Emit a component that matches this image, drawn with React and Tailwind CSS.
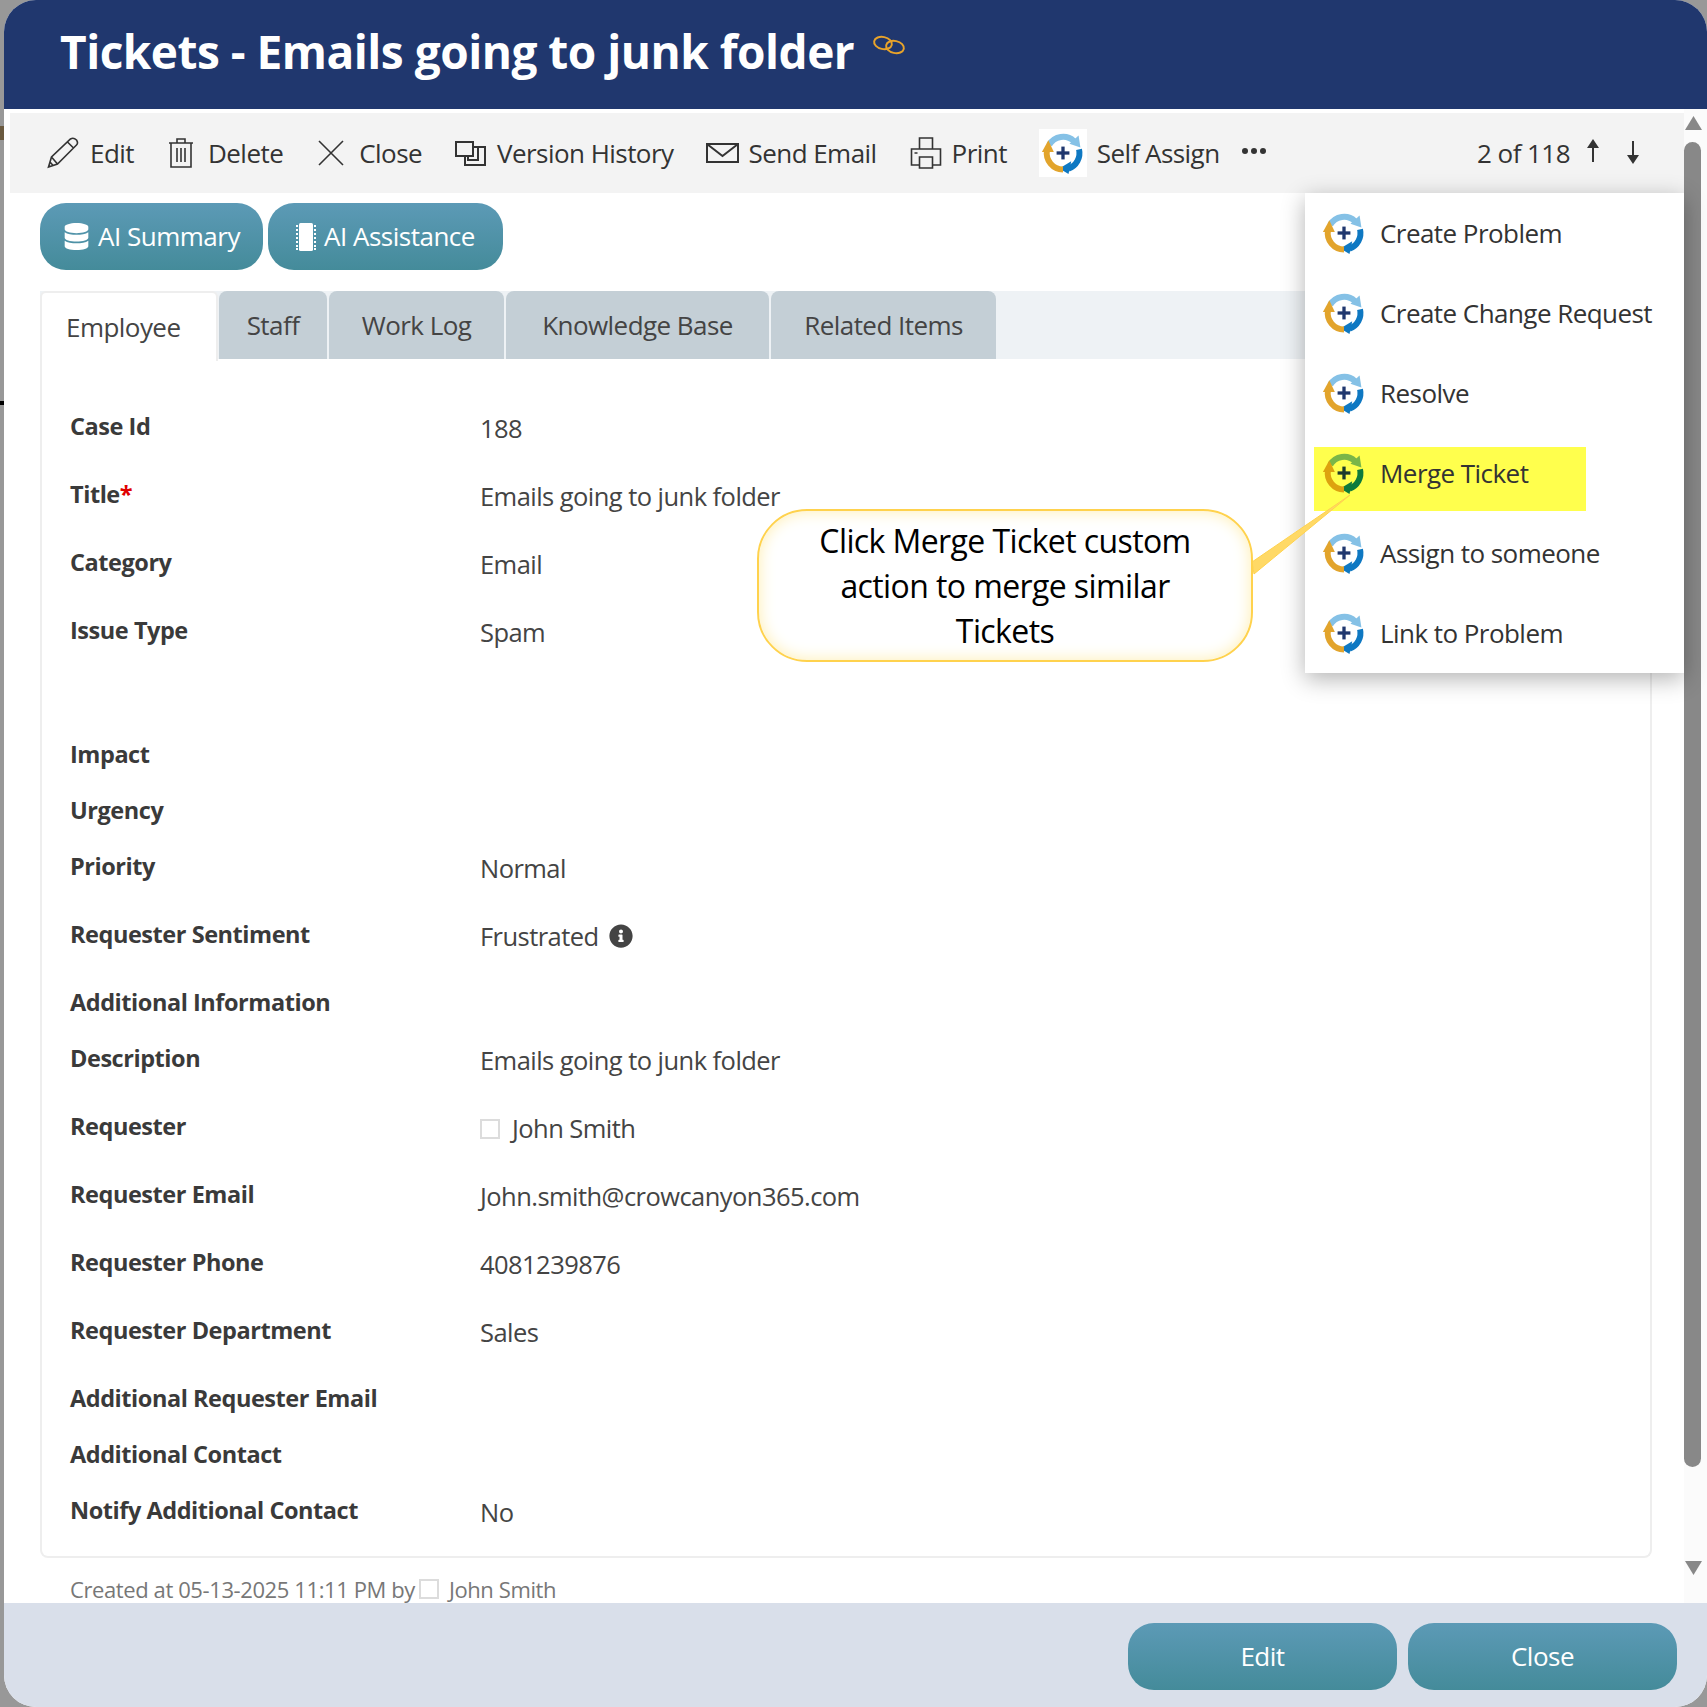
import React from "react";
import { FaDatabase, FaInfoCircle } from "react-icons/fa";

const Gear = ({ green = false, size = 44 }) => (
  <svg width={size} height={size} viewBox="0 0 48 48" fill="none" className="shrink-0">
    <path d="M9 15 A17.5 17.5 0 0 1 36 11" stroke={green ? "#7ab648" : "#85c1e6"} strokeWidth="6.5" />
    <polygon points="41,5 43,18 31,14" fill={green ? "#7ab648" : "#85c1e6"} />
    <path d="M41.5 20 A18 18 0 0 1 30 41" stroke={green ? "#0d7a3c" : "#0e78c2"} strokeWidth="6.5" />
    <polygon points="33,33 20,41 30,47" fill={green ? "#0d7a3c" : "#0e78c2"} />
    <path d="M24 42 A18 18 0 0 1 6.5 21" stroke={green ? "#dda20f" : "#e2a42c"} strokeWidth="6.5" />
    <polygon points="1,23 8,10 14,23" fill={green ? "#dda20f" : "#e2a42c"} />
    <rect x="17" y="22.2" width="14" height="3.6" fill={green ? "#1c3a2c" : "#20376e"} />
    <rect x="22.2" y="17" width="3.6" height="14" fill={green ? "#1c3a2c" : "#20376e"} />
  </svg>
);

const I = ({ w = 32, h = 32, vb = "0 0 32 32", children }) => (
  <svg width={w} height={h} viewBox={vb} fill="none" stroke="#333" strokeWidth="1.6" className="shrink-0">{children}</svg>
);

const PencilI = () => (
  <I w={33} h={32}>
    <path d="M2 30 L5 20 L24 2 Q27 0 30 3 Q32 6 30 8 L11 27 Z M5 20 L11 27 M3.5 25 L7 29 M21 5 L27 11" />
  </I>
);
const TrashI = () => (
  <I w={26} h={32} vb="0 0 26 32">
    <path d="M1 6 H25 M9 6 V2 H17 V6 M3 6 V30 H23 V6 M9 11 V25 M13 11 V25 M17 11 V25" />
  </I>
);
const XI = () => (
  <I w={28} h={28} vb="0 0 28 28">
    <path d="M2 2 L26 26 M26 2 L2 26" />
  </I>
);
const VersionI = () => (
  <I w={33} h={27} vb="0 0 33 27">
    <path strokeWidth="2" d="M2 2 H19 V16 H2 Z M19 7 H31 V25 H11 V16 M24 7 V20 H14 V16" />
  </I>
);
const MailI = () => (
  <I w={33} h={20} vb="0 0 33 20">
    <path strokeWidth="2" d="M1 1 H32 V19 H1 Z M1 1 L16.5 13 L32 1" />
  </I>
);
const PrintI = () => (
  <I w={33} h={32}>
    <path d="M10 12 V1 H23 V12 M10 28 H2 V12 H31 V28 H23 M10 20 H23 V31 H10 Z M5 16 H8" />
  </I>
);
const ArrowUp = () => (
  <svg width="14" height="24" viewBox="0 0 14 24" className="shrink-0">
    <path d="M7 0 L13 9 H8 V23 H6 V9 H1 Z" fill="#333" />
  </svg>
);
const ArrowDown = () => (
  <svg width="14" height="24" viewBox="0 0 14 24" className="shrink-0">
    <path d="M7 24 L13 15 H8 V1 H6 V15 H1 Z" fill="#333" />
  </svg>
);
const ChipI = () => (
  <svg width="20" height="28" viewBox="0 0 20 28" className="shrink-0" fill="#fff">
    <rect x="3" y="0" width="14" height="28" rx="1.5" />
    {[2, 6, 10, 14, 18, 22, 25].map((y) => (
      <g key={y}>
        <rect x="0" y={y} width="2" height="2" />
        <rect x="18" y={y} width="2" height="2" />
      </g>
    ))}
  </svg>
);
const LinkI = () => (
  <svg width="34" height="20" viewBox="0 0 34 20" fill="none" stroke="#e8a32a" strokeWidth="2" className="shrink-0">
    <ellipse cx="11" cy="8" rx="9" ry="6" transform="rotate(12 11 8)" />
    <ellipse cx="23" cy="12" rx="9" ry="6" transform="rotate(12 23 12)" />
  </svg>
);

const Tool = ({ icon, label, cls, textCls = "ml-[11px]" }) => (
  <div className={`flex items-center ${cls}`}>
    {icon}
    <span className={textCls}>{label}</span>
  </div>
);

const rows = [
  ["Case Id", "188", "h-[68px]"],
  ["Title", "Emails going to junk folder", "h-[68px]", "req"],
  ["Category", "Email", "h-[68px]"],
  ["Issue Type", "Spam", "h-[124px]"],
  ["Impact", "", "h-[56px]"],
  ["Urgency", "", "h-[56px]"],
  ["Priority", "Normal", "h-[68px]"],
  ["Requester Sentiment", "Frustrated", "h-[68px]", "info"],
  ["Additional Information", "", "h-[56px]"],
  ["Description", "Emails going to junk folder", "h-[68px]"],
  ["Requester", "John Smith", "h-[68px]", "check"],
  ["Requester Email", "John.smith@crowcanyon365.com", "h-[68px]"],
  ["Requester Phone", "4081239876", "h-[68px]"],
  ["Requester Department", "Sales", "h-[68px]"],
  ["Additional Requester Email", "", "h-[56px]"],
  ["Additional Contact", "", "h-[56px]"],
  ["Notify Additional Contact", "No", "h-[61px]"],
];

const Row = ({ r }) => (
  <div className={`grid grid-cols-[410px_1fr] ${r[2]}`}>
    <div className="text-[23.5px] leading-[30px] font-bold text-[#3a3a3a] tracking-[-0.45px]">
      {r[0]}
      {r[3] === "req" && <span className="text-[#e00000]">*</span>}
    </div>
    <div className="flex items-start text-[#444] text-[25.5px] leading-[34px] tracking-[-0.55px]">
      {r[3] === "check" && <span className="w-[20px] h-[20px] mt-[8px] mr-[12px] border-2 border-[#dcdcdc] shrink-0" />}
      <span>{r[1]}</span>
      {r[3] === "info" && <FaInfoCircle className="ml-[10px] mt-[5px] text-[24px] text-[#444]" />}
    </div>
  </div>
);

const tabs = [
  ["Staff", "w-[108px]"],
  ["Work Log", "w-[175px]"],
  ["Knowledge Base", "w-[263px]"],
  ["Related Items", "w-[225px]"],
];

const menu = ["Create Problem", "Create Change Request", "Resolve", "Merge Ticket", "Assign to someone", "Link to Problem"];

const btn = "flex items-center justify-center rounded-[26px] bg-gradient-to-b from-[#5c9ab6] to-[#448b9a] text-white";

export default function App() {
  return (
    <div className="relative w-[1707px] h-[1707px] overflow-hidden bg-[#989898] font-['Open_Sans',sans-serif]">
      <span className="absolute left-0 top-[126px] w-[4px] h-[14px] bg-[#6b5a40]" />
      <span className="absolute left-0 top-[401px] w-[4px] h-[4px] bg-black" />

      <div className="ml-[4px] w-[1703px] h-full rounded-[32px] overflow-hidden flex flex-col bg-white">
        {/* header */}
        <div className="h-[109px] shrink-0 bg-[#20376e] flex items-center pl-[56px]">
          <h1 className="text-[46px] leading-[60px] font-bold text-white tracking-[-0.5px] -mt-[8px]">Tickets - Emails going to junk folder</h1>
          <span className="ml-[18px] -mt-[20px]"><LinkI /></span>
        </div>

        {/* body */}
        <div className="flex-1 min-h-0 flex">
          <div className="flex-1 min-w-0 overflow-hidden pt-[4px]">
            <div className="ml-[6px] h-[80px] bg-[#f3f3f3] flex items-center text-[#333] text-[26px] tracking-[-0.55px] pl-[36px]">
              <Tool icon={<PencilI />} label="Edit" cls="" />
              <Tool icon={<TrashI />} label="Delete" cls="ml-[34px]" textCls="ml-[14px]" />
              <Tool icon={<XI />} label="Close" cls="ml-[34px]" textCls="ml-[14px]" />
              <Tool icon={<VersionI />} label="Version History" cls="ml-[32px]" textCls="ml-[10px]" />
              <Tool icon={<MailI />} label="Send Email" cls="ml-[32px]" textCls="ml-[10px]" />
              <Tool icon={<PrintI />} label="Print" cls="ml-[32px]" textCls="ml-[10px]" />
              <Tool icon={<span className="bg-white w-[48px] h-[48px] flex items-center justify-center shrink-0"><Gear /></span>} label="Self Assign" cls="ml-[32px]" textCls="ml-[10px]" />
              <span className="ml-[22px] flex gap-[3px] -mt-[4px]">
                <i className="w-[6px] h-[6px] rounded-full bg-[#333]" />
                <i className="w-[6px] h-[6px] rounded-full bg-[#333]" />
                <i className="w-[6px] h-[6px] rounded-full bg-[#333]" />
              </span>
              <div className="ml-auto mr-[44px] flex items-center">
                <span>2 of 118</span>
                <span className="ml-[16px] -mt-[4px]"><ArrowUp /></span>
                <span className="ml-[26px] -mt-[2px]"><ArrowDown /></span>
              </div>
            </div>

            <div className="pl-[36px] pr-[32px]">
              <div className="flex gap-[5px] pt-[10px] text-[26px] tracking-[-0.5px]">
                <button className={`${btn} w-[223px] h-[67px] gap-[8px]`}>
                  <FaDatabase className="text-[27px]" />
                  AI Summary
                </button>
                <button className={`${btn} w-[235px] h-[67px] gap-[8px]`}>
                  <ChipI />
                  AI Assistance
                </button>
              </div>

              <div className="mt-[21px] h-[68px] flex bg-[#eef2f5] text-[26px] tracking-[-0.55px]">
                <div className="w-[178px] bg-white border-t-2 border-x-2 border-[#eeeeee] rounded-t-[6px] flex items-center pl-[24px] text-[#444] h-[70px] -mb-[2px]">Employee</div>
                <div className="flex gap-[2px] ml-[1px] text-[#444]">
                  {tabs.map(([t, w]) => (
                    <div key={t} className={`${w} bg-[#c4cfd6] rounded-t-[8px] flex items-center justify-center`}>{t}</div>
                  ))}
                </div>
              </div>

              <div className="border-2 border-t-0 border-[#eeeeee] rounded-b-[8px] pl-[28px] pt-[52px]">
                {rows.map((r) => <Row key={r[0]} r={r} />)}
              </div>

              <div className="flex items-center mt-[16px] pl-[30px] text-[22px] leading-[30px] text-[#777] tracking-[-0.4px]">
                <span>Created at 05-13-2025 11:11 PM by</span>
                <span className="w-[20px] h-[20px] ml-[4px] mr-[10px] border-2 border-[#dcdcdc]" />
                <span>John Smith</span>
              </div>
            </div>
          </div>

          {/* scrollbar */}
          <div className="w-[23px] shrink-0 bg-[#fbfbfb] flex flex-col items-start pt-[7px]">
            <svg width="19" height="14" viewBox="0 0 19 14" className="shrink-0"><path d="M9.5 0 L18 14 H1 Z" fill="#888" strokeLinejoin="round" /></svg>
            <div className="w-[17px] h-[1325px] mt-[12px] bg-[#888] rounded-full" />
            <svg width="19" height="14" viewBox="0 0 19 14" className="shrink-0 mt-[94px]"><path d="M1 0 H18 L9.5 14 Z" fill="#888" /></svg>
          </div>
        </div>

        {/* footer */}
        <div className="h-[104px] shrink-0 bg-[#d9dfea] flex justify-end gap-[11px] pt-[20px] pr-[30px] text-[26px] tracking-[-0.5px]">
          <button className={`${btn} w-[269px] h-[67px]`}>Edit</button>
          <button className={`${btn} w-[269px] h-[67px]`}>Close</button>
        </div>
      </div>

      {/* dropdown menu */}
      <div className="absolute left-[1305px] top-[193px] w-[379px] bg-white shadow-[0_6px_22px_rgba(0,0,0,0.3)] text-[#333] text-[26px] tracking-[-0.55px]">
        {menu.map((m, i) => (
          <div key={m} className="relative h-[80px] flex items-center pl-[17px] gap-[14px]">
            {i === 3 && <span className="absolute left-[9px] top-[14px] w-[272px] h-[64px] bg-[#ffff4d]" />}
            <span className="relative"><Gear green={i === 3} /></span>
            <span className="relative">{m}</span>
          </div>
        ))}
      </div>

      {/* callout */}
      <svg width="110" height="90" viewBox="0 0 110 90" className="absolute left-[1248px] top-[490px]">
        <polygon points="4,72 102,5 6,84" fill="#ffd966" stroke="#ffd24d" strokeWidth="1" />
      </svg>
      <div className="absolute left-[757px] top-[509px] w-[496px] h-[153px] rounded-[50px] border-2 border-[#ffd24d] bg-white shadow-[inset_0_0_16px_#ffeeb0] flex items-center justify-center text-center text-black text-[32px] leading-[45px] tracking-[-0.6px]">
        <div className="w-[420px]">Click Merge Ticket custom action to merge similar Tickets</div>
      </div>
    </div>
  );
}
